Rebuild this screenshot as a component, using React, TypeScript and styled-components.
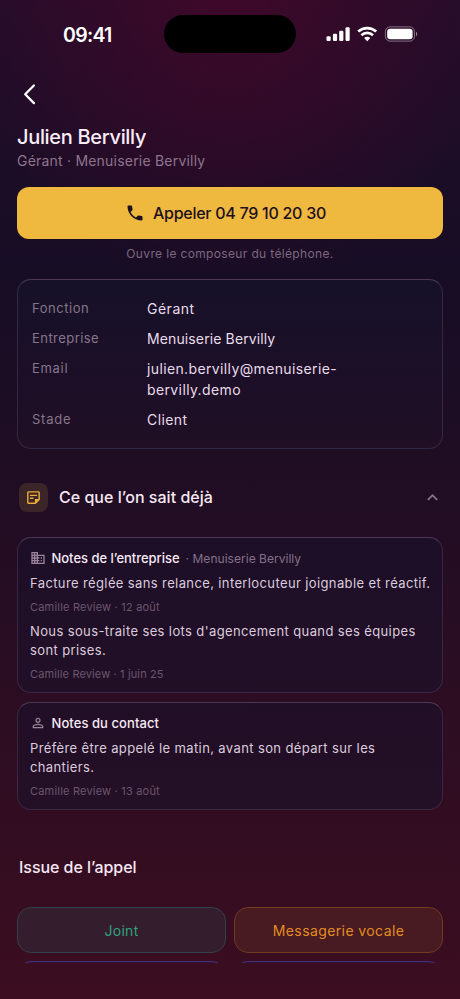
import React from "react";
import styled, { createGlobalStyle } from "styled-components";
import { MdPhone, MdOutlineStickyNote2, MdBusiness, MdPersonOutline, MdKeyboardArrowUp } from "react-icons/md";

const GlobalStyle = createGlobalStyle`
  * { box-sizing: border-box; }
  body { margin: 0; background: #1c0e24; font-family: Inter, sans-serif; }
`;

const Screen = styled.div`
  width: 460px;
  height: 999px;
  overflow: hidden;
  display: flex;
  flex-direction: column;
  color: #f6e9f4;
  background:
    radial-gradient(ellipse 260px 290px at 50% 0, rgba(80, 5, 42, 0.6), rgba(80, 5, 42, 0) 100%),
    linear-gradient(180deg, #240d29 0%, #1e0d27 13%, #170d25 27%, #1c0d24 40%, #240d23 56%, #300d22 78%, #3c0d20 100%);
`;

const StatusBar = styled.header`
  height: 68px;
  flex: none;
  display: grid;
  grid-template-columns: 164px 132px 1fr;
  align-items: center;
`;

const Island = styled.div`
  height: 38px;
  border-radius: 19px;
  background: #000;
`;

const Clock = styled.div`
  padding: 1px 0 0 63px;
  font-size: 19.5px;
  line-height: 24px;
  font-weight: 600;
  letter-spacing: -0.7px;
  color: #fff;
`;

const StatusIcons = styled.div`
  padding: 1px 0 0 30px;
  display: flex;
  align-items: center;
  svg { display: block; }
`;

const NavBar = styled.nav`
  height: 54px;
  flex: none;
  padding: 15px 0 0 22px;
`;

const BackButton = styled.button`
  border: 0;
  padding: 0;
  width: 16px;
  height: 22px;
  background: none;
  svg { display: block; }
`;

const Content = styled.main`
  height: 841px;
  flex: none;
  overflow: hidden;
  padding: 0 17px;
`;

const Text = styled.div<{ $ls: number }>`
  letter-spacing: ${(p) => p.$ls}px;
  white-space: nowrap;
`;

const Name = styled(Text).attrs({ as: "h1" })`
  margin: 0;
  font-size: 20px;
  line-height: 30px;
  font-weight: 500;
  color: #fbedf8;
`;

const Role = styled(Text)`
  font-size: 14px;
  line-height: 18px;
  color: #8e748d;
`;

const CallButton = styled.button`
  margin-top: 17px;
  width: 100%;
  height: 52px;
  border: 0;
  border-radius: 12px;
  padding: 0 9px 0 0;
  background: #efb83e;
  color: #1d1020;
  display: flex;
  align-items: center;
  justify-content: center;
  gap: 8px;
  font-family: inherit;
  font-size: 16px;
  font-weight: 500;
`;

const Caption = styled(Text)`
  margin-top: 6px;
  text-align: center;
  font-size: 12px;
  line-height: 18px;
  color: #7d6880;
`;

const Panel = styled.section<{ $tone: "info" | "note" }>`
  border: 1px solid rgba(180, 160, 200, 0.17);
  border-top-color: rgba(190, 165, 205, 0.28);
  border-radius: 14px;
  background: ${(p) => (p.$tone === "info"
    ? "linear-gradient(180deg, #161128 0%, #1b0f27 55%, #200f25 100%)"
    : "linear-gradient(180deg, rgba(26, 16, 42, 0.6), rgba(27, 17, 42, 0.6))")};
`;

const InfoPanel = styled(Panel)`
  margin-top: 16px;
  height: 170px;
  padding: 19px 14px 0;
  display: flex;
  flex-direction: column;
  gap: 10px;
`;

const InfoRow = styled.div`
  display: grid;
  grid-template-columns: 115px 1fr;
  line-height: 20.2px;
`;

const Label = styled(Text)`
  margin-top: -1px;
  font-size: 13px;
  color: #86758a;
`;

const Value = styled(Text)`
  font-size: 14px;
  color: #e9dcea;
`;

const SectionHeader = styled.div`
  margin-top: 33px;
  height: 30px;
  padding: 0 0 0 2px;
  display: flex;
  align-items: center;
`;

const IconTile = styled.div`
  width: 29px;
  height: 29px;
  border-radius: 8px;
  background: #3b2528;
  color: #e9ac35;
  display: grid;
  place-items: center;
`;

const Heading = styled(Text).attrs({ as: "h2" })`
  margin: 0;
  font-size: 16px;
  line-height: 24px;
  font-weight: 500;
  color: #f7e8f4;
`;

const SectionTitle = styled(Heading)`
  margin-left: 11px;
  flex: 1;
`;

const Chevron = styled.span`
  display: flex;
  color: #8b708b;
`;

const NotesPanel = styled(Panel)<{ $top: number; $height: number }>`
  margin-top: ${(p) => p.$top}px;
  height: ${(p) => p.$height}px;
  padding: 10px 12px 0;
`;

const NotesHeader = styled.div`
  height: 20px;
  margin-left: -0.5px;
  display: flex;
  align-items: center;
  color: #9a829b;
`;

const NotesTitle = styled(Text)`
  margin: 0 6px;
  font-size: 13px;
  font-weight: 500;
  color: #f8eaf6;
`;

const NotesScope = styled(Text)`
  font-size: 12px;
  color: #85708a;
`;

const NoteBody = styled(Text)`
  margin-top: 6px;
  font-size: 13px;
  line-height: 19px;
  color: #dccbdc;
`;

const NoteMeta = styled(Text)`
  margin: 6px 0 7px;
  font-size: 11px;
  line-height: 16px;
  color: #6c566d;
`;

const OutcomeTitle = styled(Heading)`
  margin: 45px 0 28px 2px;
`;

const OutcomeGrid = styled.div`
  display: grid;
  grid-template-columns: 1fr 1fr;
  gap: 8px;
`;

const tones = {
  green: { line: "#34404a", fill: "#341d2c", text: "#2da37f" },
  amber: { line: "#713a21", fill: "#481a21", text: "#e18d24" },
  indigo: { line: "#453078", fill: "#33133a", text: "#8b80e8" },
};

const Outcome = styled.button<{ $tone: keyof typeof tones }>`
  height: 46px;
  padding: 0;
  border-radius: 14px;
  border: 1px solid ${(p) => tones[p.$tone].line};
  background: ${(p) => tones[p.$tone].fill};
  color: ${(p) => tones[p.$tone].text};
  font-family: inherit;
  font-size: 14px;
`;

const info = [
  { label: "Fonction", ls: 0.55, lines: [{ text: "Gérant", ls: 0.5 }] },
  { label: "Entreprise", ls: 0.45, lines: [{ text: "Menuiserie Bervilly", ls: 0.12 }] },
  { label: "Email", ls: 0.7, lines: [{ text: "julien.bervilly@menuiserie-", ls: 0.37 }, { text: "bervilly.demo", ls: 0.38 }] },
  { label: "Stade", ls: 0.75, lines: [{ text: "Client", ls: 0.4 }] },
];

export default function App() {
  return (
    <>
      <GlobalStyle />
      <Screen>
        <StatusBar>
          <Clock>09:41</Clock>
          <Island />
          <StatusIcons>
            <svg width="95" height="18" viewBox="0 0 95 18">
              <g fill="#fff">
                <rect x="0.5" y="10.3" width="4.2" height="4.7" rx="1.2" />
                <rect x="6.9" y="7.8" width="4.2" height="7.2" rx="1.2" />
                <rect x="13.2" y="4.7" width="4.2" height="10.3" rx="1.2" />
                <rect x="19.5" y="1.2" width="4.2" height="13.8" rx="1.2" />
              </g>
              <g fill="none" stroke="#fff" strokeWidth="2.7">
                <path d="M32.2 5.6 A13.4 13.4 0 0 1 50.2 5.6" />
                <path d="M35.4 9.2 A8.4 8.4 0 0 1 47 9.2" />
              </g>
              <path d="M38.1 12 A4.4 4.4 0 0 1 44.3 12 L41.2 15.3 Z" fill="#fff" />
              <rect x="59.4" y="0.9" width="29" height="14.2" rx="4.6" fill="none" stroke="#fff" strokeOpacity="0.42" />
              <rect x="61.2" y="2.7" width="25.4" height="10.6" rx="3" fill="#fff" />
              <path d="M90 5.8 C91.4 6.3 91.4 9.8 90 10.3 Z" fill="#fff" fillOpacity="0.5" />
            </svg>
          </StatusIcons>
        </StatusBar>
        <NavBar>
          <BackButton aria-label="Retour">
            <svg width="16" height="22" viewBox="0 0 16 22" fill="none" stroke="#fff" strokeWidth="2.3" strokeLinecap="round" strokeLinejoin="round">
              <path d="M11.9 2.5 L3.2 11.3 L11.9 20.1" />
            </svg>
          </BackButton>
        </NavBar>
        <Content>
          <Name $ls={-0.32}>Julien Bervilly</Name>
          <Role $ls={0.21}>Gérant · Menuiserie Bervilly</Role>
          <CallButton>
            <MdPhone size={20} />
            <Text $ls={-0.27}>Appeler 04 79 10 20 30</Text>
          </CallButton>
          <Caption $ls={0.35}>Ouvre le composeur du téléphone.</Caption>

          <InfoPanel $tone="info">
            {info.map((row) => (
              <InfoRow key={row.label}>
                <Label $ls={row.ls}>{row.label}</Label>
                <div>
                  {row.lines.map((line) => (
                    <Value key={line.text} $ls={line.ls}>{line.text}</Value>
                  ))}
                </div>
              </InfoRow>
            ))}
          </InfoPanel>

          <SectionHeader>
            <IconTile><MdOutlineStickyNote2 size={17} /></IconTile>
            <SectionTitle $ls={0.02}>Ce que l’on sait déjà</SectionTitle>
            <Chevron><MdKeyboardArrowUp size={21} /></Chevron>
          </SectionHeader>

          <NotesPanel $tone="note" $top={25} $height={156}>
            <NotesHeader>
              <MdBusiness size={16} />
              <NotesTitle $ls={-0.03}>Notes de l’entreprise</NotesTitle>
              <NotesScope $ls={0.03}>· Menuiserie Bervilly</NotesScope>
            </NotesHeader>
            <NoteBody $ls={0.38}>Facture réglée sans relance, interlocuteur joignable et réactif.</NoteBody>
            <NoteMeta $ls={0.2}>Camille Review · 12 août</NoteMeta>
            <NoteBody $ls={0.38}>
              Nous sous-traite ses lots d'agencement quand ses équipes
              <br />
              sont prises.
            </NoteBody>
            <NoteMeta $ls={0.13}>Camille Review · 1 juin 25</NoteMeta>
          </NotesPanel>

          <NotesPanel $tone="note" $top={9} $height={108}>
            <NotesHeader>
              <MdPersonOutline size={16} />
              <NotesTitle $ls={0.07}>Notes du contact</NotesTitle>
            </NotesHeader>
            <NoteBody $ls={0.38}>
              Préfère être appelé le matin, avant son départ sur les
              <br />
              chantiers.
            </NoteBody>
            <NoteMeta $ls={0.2}>Camille Review · 13 août</NoteMeta>
          </NotesPanel>

          <OutcomeTitle $ls={-0.05}>Issue de l’appel</OutcomeTitle>
          <OutcomeGrid>
            <Outcome $tone="green"><Text $ls={0.27}>Joint</Text></Outcome>
            <Outcome $tone="amber"><Text $ls={0.4}>Messagerie vocale</Text></Outcome>
            <Outcome $tone="indigo" />
            <Outcome $tone="indigo" />
          </OutcomeGrid>
        </Content>
      </Screen>
    </>
  );
}
